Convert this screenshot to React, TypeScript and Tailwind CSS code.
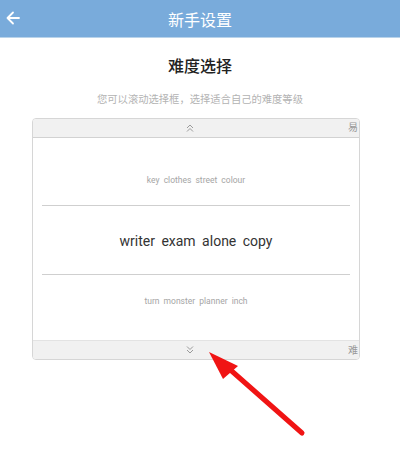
import React from "react";

export default function App() {
  return (
    <div
      className="relative w-[400px] h-[476px] bg-white overflow-hidden"
      style={{ fontFamily: 'Roboto, "Noto Sans CJK SC", sans-serif' }}
    >
      <div className="relative h-[38px] bg-[#79abdb] flex items-center justify-center border-b border-[#b9d3ea]">
        <svg className="absolute left-[5px] top-[10px]" width="16" height="16" viewBox="0 0 16 16">
          <path d="M14 8H2.5M8 2.5L2.5 8L8 13.5" stroke="white" strokeWidth="1.8" fill="none" strokeLinecap="round" strokeLinejoin="round" />
        </svg>
        <span className="text-white text-[16px] leading-none" style={{ fontFamily: '"Noto Sans CJK SC", sans-serif' }}>新手设置</span>
      </div>

      <div className="flex flex-col items-center">
        <div className="mt-[19px] text-[16px] text-[#222] font-medium leading-none" style={{ fontFamily: '"Noto Sans CJK SC", sans-serif' }}>难度选择</div>
        <div className="mt-[21px] text-[10.3px] text-[#b3b3b3] leading-none" style={{ fontFamily: '"Noto Sans CJK SC", sans-serif' }}>
          您可以滚动选择框，选择适合自己的难度等级
        </div>
      </div>

      <div className="ml-[32px] mt-[14px] w-[328px] h-[242px] border border-[#d6d6d6] rounded-[4px] overflow-hidden flex flex-col">
        <div className="relative h-[19px] bg-[#f1f1f1] border-b border-[#d2d2d2] flex items-center justify-center">
          <svg className="mr-[12px]" width="10" height="10" viewBox="0 0 10 10">
            <path d="M2 5L5 2L8 5M2 8.5L5 5.5L8 8.5" stroke="#9a9a9a" strokeWidth="1" fill="none" />
          </svg>
          <span className="absolute right-[1px] top-[3px] text-[10px] text-[#999] leading-none" style={{ fontFamily: '"Noto Sans CJK SC", sans-serif' }}>易</span>
        </div>
        <div className="flex-1 flex flex-col px-[9px]">
          <div className="h-[67px] flex items-center justify-center text-[8.5px] text-[#a5a5a5] pt-[18px]" style={{ wordSpacing: "2px" }}>
            key clothes street colour
          </div>
          <div className="h-px bg-[#cfcfcf]" />
          <div className="h-[68px] flex items-center justify-center text-[14px] text-[#333] pt-[2px]" style={{ wordSpacing: "3px" }}>
            writer exam alone copy
          </div>
          <div className="h-px bg-[#cfcfcf]" />
          <div className="flex-1 flex items-center justify-center text-[8.5px] text-[#a5a5a5] pb-[12px]" style={{ wordSpacing: "2px" }}>
            turn monster planner inch
          </div>
        </div>
        <div className="relative h-[19px] bg-[#f1f1f1] border-t border-[#e3e3e3] flex items-center justify-center">
          <svg className="mr-[12px]" width="10" height="10" viewBox="0 0 10 10">
            <path d="M2 1.5L5 4.5L8 1.5M2 5L5 8L8 5" stroke="#9a9a9a" strokeWidth="1" fill="none" />
          </svg>
          <span className="absolute right-[1px] top-[4px] text-[10px] text-[#999] leading-none" style={{ fontFamily: '"Noto Sans CJK SC", sans-serif' }}>难</span>
        </div>
      </div>

      <svg className="absolute left-0 top-0 pointer-events-none" width="400" height="476" viewBox="0 0 400 476">
        <line x1="302" y1="433" x2="226" y2="366" stroke="#f01414" strokeWidth="5" strokeLinecap="round" />
        <polygon points="209,352 238,366 223,379" fill="#f01414" />
      </svg>
    </div>
  );
}
